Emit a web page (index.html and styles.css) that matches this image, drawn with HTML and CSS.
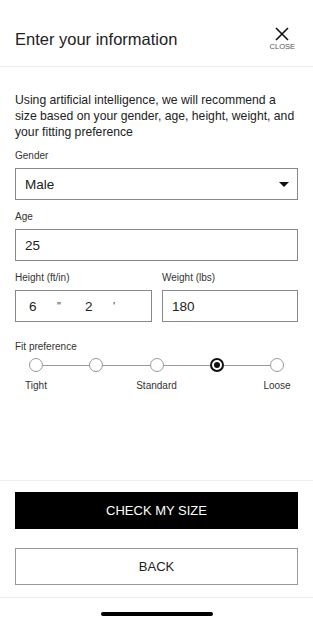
FILE: index.html
```html
<!DOCTYPE html>
<html lang="en">
<head>
    <meta charset="UTF-8">
    <meta name="viewport" content="width=device-width, initial-scale=1.0">
    <title>Enter your information</title>
    <link rel="stylesheet" href="styles.css">
</head>
<body>
<div class="screen">

    <header class="top-bar">
        <h1 class="title">Enter your information</h1>
        <button class="close-btn">
            <svg width="14" height="14" viewBox="0 0 14 14">
                <path d="M1 1 L13 13 M13 1 L1 13" stroke="#111" stroke-width="1.6" fill="none"/>
            </svg>
            <span>CLOSE</span>
        </button>
    </header>

    <main class="form">
        <p class="intro">Using artificial intelligence, we will recommend a size based on your gender, age, height, weight, and your fitting preference</p>

        <div class="field">
            <label class="field-label">Gender</label>
            <div class="box select">
                <span>Male</span>
                <span class="caret"></span>
            </div>
        </div>

        <div class="field">
            <label class="field-label">Age</label>
            <div class="box">25</div>
        </div>

        <div class="field-row">
            <div class="field">
                <label class="field-label">Height (ft/in)</label>
                <div class="box height-box">
                    <span class="num">6</span>
                    <span class="unit">"</span>
                    <span class="num">2</span>
                    <span class="unit">'</span>
                </div>
            </div>
            <div class="field">
                <label class="field-label">Weight (lbs)</label>
                <div class="box">180</div>
            </div>
        </div>

        <div class="fit">
            <label class="field-label">Fit preference</label>
            <div class="fit-track">
                <span class="dot"></span><span class="seg"></span>
                <span class="dot"></span><span class="seg"></span>
                <span class="dot"></span><span class="seg"></span>
                <span class="dot active"></span><span class="seg"></span>
                <span class="dot"></span>
            </div>
            <div class="fit-labels">
                <span class="tick">Tight</span><span class="gap"></span>
                <span class="tick"></span><span class="gap"></span>
                <span class="tick">Standard</span><span class="gap"></span>
                <span class="tick"></span><span class="gap"></span>
                <span class="tick">Loose</span>
            </div>
        </div>
    </main>

    <footer class="actions">
        <button class="btn btn-dark">CHECK MY SIZE</button>
        <button class="btn btn-light">BACK</button>
    </footer>

    <div class="home-area">
        <div class="home-bar"></div>
    </div>

</div>
</body>
</html>
```

FILE: styles.css
```css
* {
    box-sizing: border-box;
}
body {
    margin: 0;
    font-family: 'Liberation Sans', Arial, sans-serif;
    color: #222;
    background-color: #fff;
}
.screen {
    height: 622px;
    display: flex;
    flex-direction: column;
}

/* header */
.top-bar {
    height: 67px;
    display: flex;
    align-items: flex-start;
    justify-content: space-between;
    padding: 28px 15px 0 15px;
    border-bottom: 1px solid #ececec;
}
.title {
    margin: 0;
    font-size: 16.5px;
    font-weight: normal;
    line-height: 22px;
    color: #222;
}
.close-btn {
    display: flex;
    flex-direction: column;
    align-items: center;
    background: none;
    border: none;
    padding: 0;
    margin-top: -1px;
    margin-right: 3px;
    cursor: pointer;
}
.close-btn span {
    font-size: 7.5px;
    color: #555;
    margin-top: 1px;
}

/* form */
.form {
    flex: 1;
    padding: 25px 15px 0 15px;
}
.intro {
    margin: 0 0 10px 0;
    font-size: 12.2px;
    line-height: 16px;
    color: #222;
}
.field {
    margin-bottom: 11px;
}
.field-label {
    display: block;
    font-size: 10px;
    line-height: 12px;
    color: #333;
    margin-bottom: 6px;
}
.box {
    height: 32px;
    border: 1px solid #888;
    display: flex;
    align-items: center;
    padding: 0 9px;
    font-size: 13.5px;
    color: #222;
}
.select {
    justify-content: space-between;
    padding-right: 8px;
}
.caret {
    width: 0;
    height: 0;
    border-left: 5px solid transparent;
    border-right: 5px solid transparent;
    border-top: 5px solid #111;
}
.field-row {
    display: grid;
    grid-template-columns: 137px 136px;
    gap: 10px;
    margin-bottom: 19px;
}
.field-row .field {
    margin-bottom: 0;
}
.height-box {
    padding-left: 13px;
}
.height-box span {
    width: 28px;
}
.height-box .unit {
    font-size: 11px;
    color: #333;
}

/* fit slider */
.fit-track {
    display: flex;
    align-items: center;
    padding: 0 14px;
    margin-top: -1px;
}
.dot {
    width: 14px;
    height: 14px;
    border: 1.3px solid #999;
    border-radius: 50%;
    background-color: #fff;
    display: flex;
    align-items: center;
    justify-content: center;
}
.dot.active {
    border: 2px solid #111;
}
.dot.active::after {
    content: "";
    width: 6px;
    height: 6px;
    border-radius: 50%;
    background-color: #111;
}
.seg {
    flex: 1;
    height: 1px;
    background-color: #999;
}
.fit-labels {
    display: flex;
    padding: 0 14px;
    margin-top: 8px;
}
.tick {
    width: 14px;
    display: flex;
    justify-content: center;
    white-space: nowrap;
    font-size: 10px;
    color: #333;
}
.fit-labels .gap {
    flex: 1;
}

/* bottom buttons */
.actions {
    display: flex;
    flex-direction: column;
    gap: 19px;
    padding: 11px 15px 12px 15px;
    border-top: 1px solid #ececec;
    border-bottom: 1px solid #ececec;
}
.btn {
    height: 37px;
    font-family: 'Liberation Sans', Arial, sans-serif;
    font-size: 13px;
    cursor: pointer;
}
.btn-dark {
    background-color: #000;
    color: #fff;
    border: 1px solid #000;
}
.btn-light {
    background-color: #fff;
    color: #222;
    border: 1px solid #999;
}

.home-area {
    height: 24px;
    display: flex;
    justify-content: center;
    padding-top: 14px;
}
.home-bar {
    width: 112px;
    height: 4px;
    border-radius: 2px;
    background-color: #000;
}
```
